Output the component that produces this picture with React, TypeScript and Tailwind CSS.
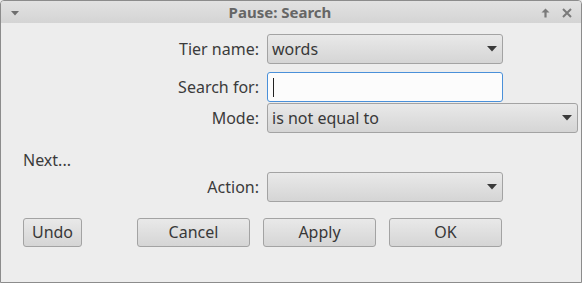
import React from 'react'

const font = { fontFamily: '"Noto Sans", "Open Sans", sans-serif' }

function Arrow() {
  return (
    <svg width="10" height="6" viewBox="0 0 10 6" className="shrink-0">
      <path d="M0 0 L10 0 L5 5.5 Z" fill="#3a3a3a" />
    </svg>
  )
}

function Combo({ value, wide }: { value?: string; wide?: boolean }) {
  return (
    <div
      className={`flex items-center justify-between h-[30px] ${wide ? 'w-[311px]' : 'w-[236px]'} pl-[4px] pr-[5px] rounded-[3px] border border-[#a3a3a3] bg-gradient-to-b from-[#e9e9e9] to-[#d5d5d5] text-[16px] text-[#383838]`}
    >
      <span className="leading-none -mt-[1px]">{value}</span>
      <Arrow />
    </div>
  )
}

function Label({ children }: { children: React.ReactNode }) {
  return <div className="text-right text-[16px] text-[#3b3b3b] leading-none">{children}</div>
}

function Button({ children, w }: { children: React.ReactNode; w: string }) {
  return (
    <div
      className={`${w} h-[29px] flex items-center justify-center rounded-[3px] border border-[#a3a3a3] bg-gradient-to-b from-[#e9e9e9] to-[#d5d5d5] text-[16px] text-[#383838]`}
    >
      <span className="-mt-[1px]">{children}</span>
    </div>
  )
}

export default function App() {
  return (
    <div style={font} className="w-[582px] h-[283px] overflow-hidden bg-[#ededed]">
      <div className="w-full h-full flex flex-col border border-[#8c8c8c] rounded-t-[4px] overflow-hidden">
        {/* title bar */}
        <div className="relative h-[22px] shrink-0 flex items-center justify-center pr-[22px] bg-gradient-to-b from-[#e2e2e2] to-[#d4d4d4]">
          <svg width="8" height="5" viewBox="0 0 8 5" className="absolute left-[10px] top-[10px]">
            <path d="M0 0 L8 0 L4 4.5 Z" fill="#6e6e6e" />
          </svg>
          <span className="text-[15px] font-bold text-[#666666] leading-none">Pause: Search</span>
          <svg width="9" height="10" viewBox="0 0 9 10" className="absolute right-[31px] top-[7px]">
            <path d="M4.5 0.5 L8.5 4.5 L5.6 4.5 L5.6 9.5 L3.4 9.5 L3.4 4.5 L0.5 4.5 Z" fill="#7a7a7a" />
          </svg>
          <svg width="10" height="10" viewBox="0 0 10 10" className="absolute right-[9px] top-[7px]">
            <path d="M1 1 L9 9 M9 1 L1 9" stroke="#7a7a7a" strokeWidth="2" />
          </svg>
        </div>

        {/* body */}
        <div className="flex flex-col pt-[11px]">
          <div className="grid grid-cols-[258px_auto] gap-x-[8px] items-center">
            <Label>Tier name:</Label>
            <Combo value="words" />
          </div>
          <div className="grid grid-cols-[258px_auto] gap-x-[8px] items-center mt-[8px]">
            <Label>Search for:</Label>
            <div className="h-[30px] w-[236px] rounded-[3px] border border-[#4a90d9] bg-[#fcfcfc] flex items-center pl-[5px]">
              <div className="w-[1px] h-[19px] bg-[#222]" />
            </div>
          </div>
          <div className="grid grid-cols-[258px_auto] gap-x-[8px] items-center mt-[1px]">
            <Label>Mode:</Label>
            <Combo value="is not equal to" wide />
          </div>

          <div className="pl-[22px] mt-[16px] text-[16px] text-[#3b3b3b] leading-[22px]">Next...</div>

          <div className="grid grid-cols-[258px_auto] gap-x-[8px] items-center mt-[1px]">
            <Label>Action:</Label>
            <Combo />
          </div>

          <div className="flex mt-[16px] pl-[22px]">
            <Button w="w-[59px]">Undo</Button>
            <div className="flex gap-[13px] ml-[55px]">
              <Button w="w-[113px]">Cancel</Button>
              <Button w="w-[113px]">Apply</Button>
              <Button w="w-[113px]">OK</Button>
            </div>
          </div>
        </div>
      </div>
    </div>
  )
}
